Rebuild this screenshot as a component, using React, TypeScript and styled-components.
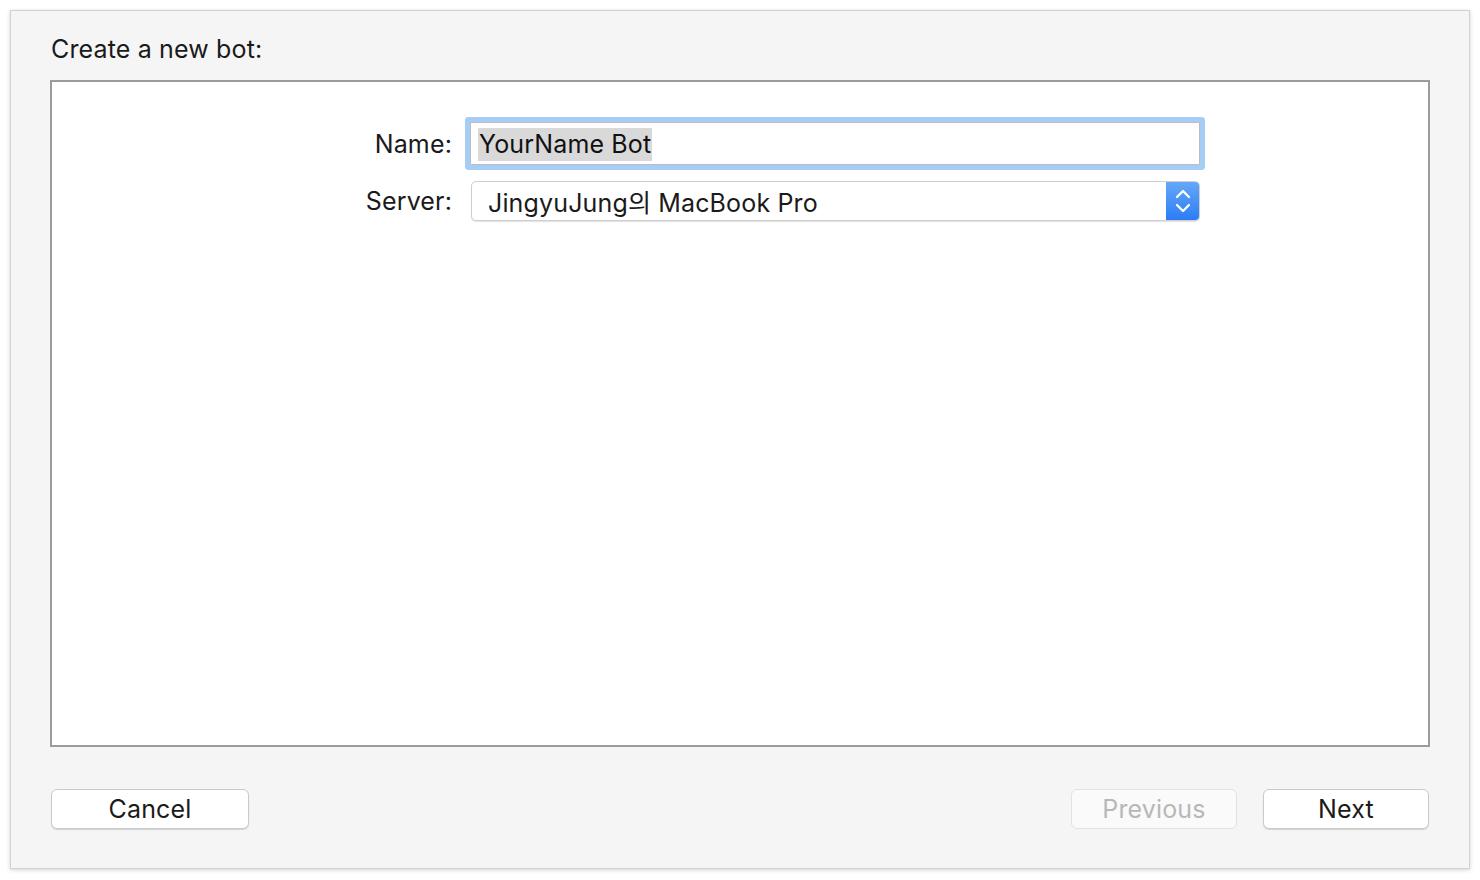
import React from "react";
import styled, { createGlobalStyle } from "styled-components";

const Global = createGlobalStyle`
  html, body { margin: 0; padding: 0; background: #ffffff; }
  body { font-family: Inter, "Noto Sans", "Noto Sans CJK KR", sans-serif; }
  * { box-sizing: border-box; }
`;

const Page = styled.div`
  width: 1480px;
  height: 880px;
  padding: 10px;
`;

const Window = styled.div`
  width: 1460px;
  height: 859px;
  background: #f5f5f5;
  border: 1px solid #d2d2d2;
  box-shadow: 0 1px 4px rgba(0, 0, 0, 0.18);
  padding: 24px 39px 0 39px;
  display: flex;
  flex-direction: column;
`;

const Title = styled.div`
  font-size: 25px;
  letter-spacing: 0.15px;
  line-height: 28px;
  color: #1a1a1a;
  margin-left: 1px;
  height: 28px;
`;

const Panel = styled.div`
  margin-top: 17px;
  height: 667px;
  background: #ffffff;
  border: 2px solid #9b9b9b;
  padding-top: 40px;
`;

const Form = styled.div`
  display: grid;
  grid-template-columns: 400px 730px;
  column-gap: 18px;
  row-gap: 16px;
  align-items: center;
`;

const Label = styled.div`
  font-size: 25px;
  letter-spacing: 0.15px;
  color: #1a1a1a;
  text-align: right;
`;

const TextField = styled.div`
  height: 43px;
  background: #ffffff;
  border: 1px solid #bdbdbd;
  border-radius: 1px;
  box-shadow: 0 0 0 5px #a6cdf6;
  display: flex;
  align-items: center;
  padding: 1px 0 0 7px;
`;

const Selected = styled.span`
  background: #d9d9d9;
  font-size: 25px;
  letter-spacing: 0.15px;
  line-height: 33px;
  color: #111;
  padding: 0 1px;
`;

const Popup = styled.div`
  height: 40px;
  margin-left: 1px;
  background: #ffffff;
  border: 1px solid #cfcfcf;
  border-radius: 5px;
  box-shadow: 0 1px 1px rgba(0, 0, 0, 0.12);
  display: flex;
  align-items: stretch;
  overflow: hidden;
`;

const PopupText = styled.div`
  flex: 1;
  font-size: 25px;
  letter-spacing: 0.15px;
  color: #1a1a1a;
  display: flex;
  align-items: center;
  padding-left: 16px;
  font-family: Inter, "Noto Sans CJK KR", sans-serif;
`;

const Stepper = styled.div`
  width: 33px;
  background: linear-gradient(#65a8f9, #2c7cf5);
  display: flex;
  align-items: center;
  justify-content: center;
`;

const Footer = styled.div`
  display: flex;
  align-items: center;
  margin-top: 42px;
  padding: 0 1px;
  gap: 26px;
`;

const Spacer = styled.div`
  flex: 1;
`;

const Button = styled.button<{ $w: number; $disabled?: boolean }>`
  width: ${(p) => p.$w}px;
  height: 40px;
  border-radius: 6px;
  font-family: Inter, sans-serif;
  font-size: 25px;
  letter-spacing: 0.15px;
  background: ${(p) => (p.$disabled ? "#fafafa" : "#ffffff")};
  color: ${(p) => (p.$disabled ? "#b8b8b8" : "#1a1a1a")};
  border: 1px solid ${(p) => (p.$disabled ? "#e2e2e2" : "#cacaca")};
  box-shadow: ${(p) => (p.$disabled ? "none" : "0 1px 1px rgba(0,0,0,0.14)")};
  padding: 0;
`;

export default function App() {
  return (
    <Page>
      <Global />
      <Window>
        <Title>Create a new bot:</Title>
        <Panel>
          <Form>
            <Label>Name:</Label>
            <TextField>
              <Selected>YourName Bot</Selected>
            </TextField>
            <Label>Server:</Label>
            <Popup>
              <PopupText>JingyuJung의 MacBook Pro</PopupText>
              <Stepper>
                <svg width="18" height="28" viewBox="0 0 18 28" fill="none" stroke="#fff" strokeWidth="2.3" strokeLinecap="round" strokeLinejoin="round">
                  <path d="M3 10 L9 4 L15 10" />
                  <path d="M3 18 L9 24 L15 18" />
                </svg>
              </Stepper>
            </Popup>
          </Form>
        </Panel>
        <Footer>
          <Button $w={198}>Cancel</Button>
          <Spacer />
          <Button $w={166} $disabled>Previous</Button>
          <Button $w={166}>Next</Button>
        </Footer>
      </Window>
    </Page>
  );
}
